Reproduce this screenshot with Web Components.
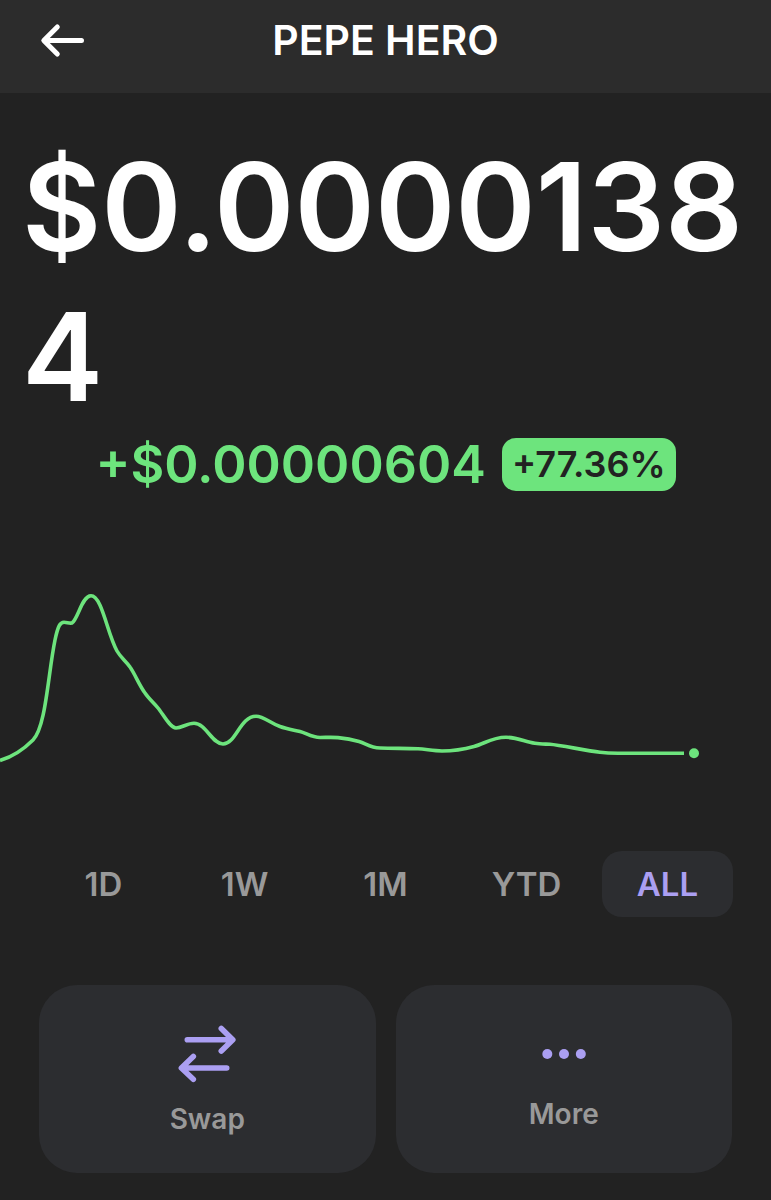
<!DOCTYPE html>
<html lang="en">
<head>
<meta charset="utf-8">
<meta name="viewport" content="width=device-width, initial-scale=1">
<title>PEPE HERO</title>
<style>
    body {
        margin: 0;
        min-height: 100vh;
        background-color: #222222;
        color: #ffffff;
        font-family: Inter, "Liberation Sans", sans-serif;
        --green: #6de47d;
        --purple: #ab9ff2;
        --muted: #999999;
        --card: #2c2d30;
    }

    main {
        display: flex;
        flex-direction: column;
    }

    .actions {
        display: grid;
        grid-template-columns: 1fr 1fr;
        gap: 20px;
        padding: 68px 39px 27px;
    }
</style>
</head>
<body>
<token-header>PEPE HERO</token-header>
<main>
    <token-price>
        $0.00001384
        <span slot="change">+$0.00000604</span>
        <span slot="percent">+77.36%</span>
    </token-price>
    <price-chart></price-chart>
    <range-tabs ranges="1D,1W,1M,YTD,ALL" selected="ALL"></range-tabs>
    <div class="actions">
        <action-card>
            <svg slot="icon" width="64" height="64" viewBox="0 0 64 64" fill="none" stroke="#ab9ff2" stroke-width="5.6" stroke-linecap="round" stroke-linejoin="round" aria-hidden="true">
                <path d="M12.3 17.7H57.5M46.3 6.5L57.8 17.7L46.3 29.1M51.7 46H6.5M18.3 34.5L6.4 46L18.3 57.3"/>
            </svg>
            Swap
        </action-card>
        <action-card>
            <svg slot="icon" width="54" height="54" viewBox="0 0 54 54" fill="#ab9ff2" aria-hidden="true">
                <circle cx="10.3" cy="27" r="5"/>
                <circle cx="27" cy="27" r="5"/>
                <circle cx="43.8" cy="27" r="5"/>
            </svg>
            More
        </action-card>
    </div>
</main>

<script>
// Top bar with back button and title
class TokenHeader extends HTMLElement {
    constructor() {
        super();
        const shadow = this.attachShadow({ mode: 'open' });
        shadow.innerHTML = `
            <style>
                :host {
                    display: block;
                    background-color: #2c2c2c;
                }
                header {
                    display: grid;
                    grid-template-columns: 48px 1fr 48px;
                    align-items: center;
                    padding: 16px 38px 29px;
                }
                button {
                    display: flex;
                    padding: 0;
                    border: none;
                    background: none;
                    cursor: pointer;
                }
                h1 {
                    margin: 0;
                    font-size: 41px;
                    font-weight: 600;
                    line-height: 48px;
                    text-align: center;
                }
            </style>
            <header>
                <button type="button" aria-label="Back">
                    <svg width="48" height="48" viewBox="0 0 48 48" fill="none" stroke="#fff" stroke-width="5" stroke-linecap="round" stroke-linejoin="round">
                        <path d="M43.5 24.5H6M19.3 11L5.8 24.5L19.3 38"/>
                    </svg>
                </button>
                <h1><slot></slot></h1>
            </header>
        `;
    }
}

// Current price, absolute change and percent badge
class TokenPrice extends HTMLElement {
    constructor() {
        super();
        const shadow = this.attachShadow({ mode: 'open' });
        shadow.innerHTML = `
            <style>
                :host {
                    display: block;
                    padding: 39px 22px 0;
                }
                .price {
                    font-size: 122px;
                    font-weight: 600;
                    line-height: 150px;
                    word-break: break-all;
                }
                .row {
                    display: flex;
                    justify-content: center;
                    align-items: center;
                    gap: 16px;
                    margin-top: 6px;
                    line-height: 53px;
                    font-weight: 600;
                }
                .change {
                    font-size: 52px;
                    color: var(--green);
                }
                .percent {
                    padding: 0 10px;
                    border-radius: 14px;
                    font-size: 36px;
                    color: #222222;
                    background-color: var(--green);
                }
            </style>
            <div class="price"><slot></slot></div>
            <div class="row">
                <div class="change"><slot name="change"></slot></div>
                <div class="percent"><slot name="percent"></slot></div>
            </div>
        `;
    }
}

// Line chart with a dot on the last price
class PriceChart extends HTMLElement {
    constructor() {
        super();
        const shadow = this.attachShadow({ mode: 'open' });
        shadow.innerHTML = `
            <style>
                :host {
                    display: block;
                    margin-top: 79px;
                }
                svg {
                    display: block;
                    width: 100%;
                }
                path {
                    fill: none;
                    stroke: var(--green);
                    stroke-width: 3.6;
                }
                circle {
                    fill: var(--green);
                }
            </style>
            <svg viewBox="0 0 771 220" role="img" aria-label="Price chart">
                <path d="M0 190.5C12 187 22 181 33 170C46 157 48 104 55 70
                    C58 56 60 52.3 64 52.3C67 52.3 69 53.5 72 53
                    C78 49 82 25.8 91 25.8C102 25.8 107 63 117 81
                    C121 88 126 91 130 97C135 104 139 115 145 123
                    C149 129 154 133 158 138C163 144 170 158 176 158
                    C182 158 187 153.3 194 153.3C206 153.3 212 174 223 174
                    C236 174 240 146.3 256 146.3C264 146.3 270 153 280 156.5
                    C287 159 294 160 300 161.5C306 163 312 167.5 320 167.5
                    C326 167.5 332 167 338 167.6C345 168.3 352 169.5 359 171.5
                    C366 173.5 370 177.7 380 178C392 178.5 405 178.3 418 178.8
                    C426 179.3 434 181 442 181C452 181 465 179 474 176.5
                    C484 174 492 167.3 506 167.3C518 167.3 525 172 535 173.2
                    C540 174 545 174 550 174.3C560 175 585 180.5 600 182.3
                    C606 183.1 612 183.3 618 183.3H684"/>
                <circle cx="694" cy="183.3" r="5"/>
            </svg>
        `;
    }
}

// Time range buttons
class RangeTabs extends HTMLElement {
    constructor() {
        super();
        this.attachShadow({ mode: 'open' });
    }

    connectedCallback() {
        const ranges = this.getAttribute('ranges').split(',');
        const selected = this.getAttribute('selected');
        this.shadowRoot.innerHTML = `
            <style>
                :host {
                    display: grid;
                    grid-auto-flow: column;
                    grid-auto-columns: 1fr;
                    gap: 10px;
                    margin-top: 61px;
                    padding: 0 38px;
                }
                button {
                    padding: 0;
                    border: none;
                    border-radius: 20px;
                    background: none;
                    color: var(--muted);
                    font: 600 33px/66px Inter, "Liberation Sans", sans-serif;
                    cursor: pointer;
                }
                button[aria-pressed="true"] {
                    background-color: var(--card);
                    color: var(--purple);
                }
            </style>
            ${ranges.map((r) => `<button type="button" aria-pressed="${r === selected}">${r}</button>`).join('')}
        `;

        const buttons = this.shadowRoot.querySelectorAll('button');
        buttons.forEach((button) => {
            button.addEventListener('click', () => {
                buttons.forEach((b) => b.setAttribute('aria-pressed', b === button));
            });
        });
    }
}

// Large button with an icon above its label
class ActionCard extends HTMLElement {
    constructor() {
        super();
        const shadow = this.attachShadow({ mode: 'open' });
        shadow.innerHTML = `
            <style>
                :host {
                    display: block;
                }
                button {
                    display: flex;
                    flex-direction: column;
                    justify-content: center;
                    align-items: center;
                    gap: 15px;
                    width: 100%;
                    min-height: 188px;
                    padding: 0;
                    border: none;
                    border-radius: 38px;
                    background-color: var(--card);
                    color: var(--muted);
                    font: 600 28px/36px Inter, "Liberation Sans", sans-serif;
                    cursor: pointer;
                }
            </style>
            <button type="button">
                <slot name="icon"></slot>
                <span><slot></slot></span>
            </button>
        `;
    }
}

customElements.define('token-header', TokenHeader);
customElements.define('token-price', TokenPrice);
customElements.define('price-chart', PriceChart);
customElements.define('range-tabs', RangeTabs);
customElements.define('action-card', ActionCard);
</script>
</body>
</html>
